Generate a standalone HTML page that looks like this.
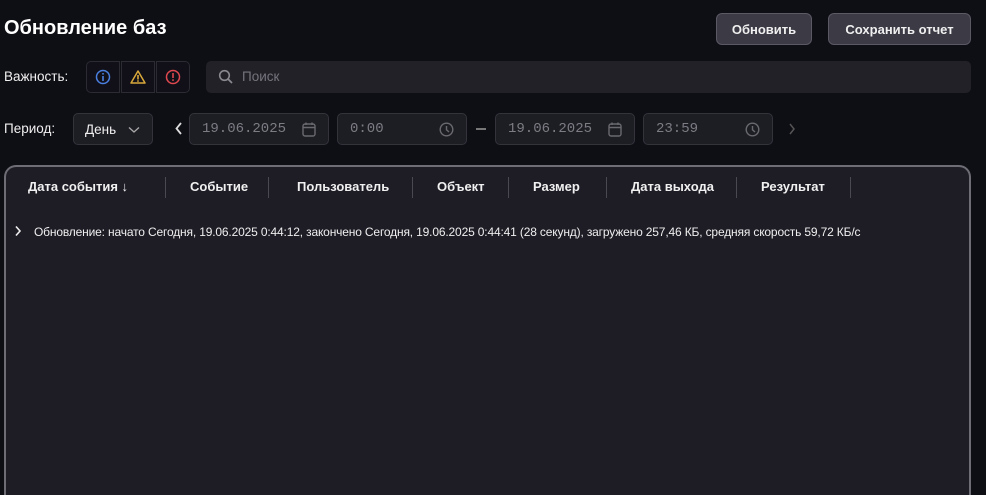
<!DOCTYPE html>
<html><head><meta charset="utf-8"><style>
*{box-sizing:border-box;margin:0;padding:0}
html{width:986px;height:495px;overflow:hidden;background:#0e0e15}
body{width:986px;height:495px;background:#0e0e15;font-family:"Liberation Sans",sans-serif;color:#fff;position:relative;overflow:hidden}
.a{position:absolute}
.btn{position:absolute;top:13px;height:32px;background:#3b3a45;border:1px solid #5a5964;border-radius:6px;font-weight:bold;font-size:13px;display:flex;align-items:center;justify-content:center;color:#f0f0f0}
.lbl{font-size:13.5px;color:#f0f0f0}
.ib{position:absolute;top:61px;width:34px;height:32px;border:1px solid #2c2b33;background:#111018;display:flex;align-items:center;justify-content:center}
.inp{position:absolute;top:113px;height:32px;background:#1d1d24;border:1px solid #34333c;border-radius:5px;font-family:"Liberation Mono",monospace;font-size:14px;color:#7d7c84;padding-left:12px;display:flex;align-items:center}
.inp svg{position:absolute;right:12px;top:8px}
.th{position:absolute;top:179px;font-weight:bold;font-size:13px;color:#f0f0f0}
.sep{position:absolute;top:177px;width:1px;height:21px;background:#4a4952}
</style></head><body>
<div class="a" style="left:4px;top:17px;font-size:20px;font-weight:bold">Обновление баз</div>
<div class="btn" style="left:716px;width:96px">Обновить</div>
<div class="btn" style="left:828px;width:143px">Сохранить отчет</div>
<div class="a lbl" style="left:4px;top:69px">Важность:</div>
<div class="ib" style="left:86px;border-radius:5px 0 0 5px"><svg width="16" height="16"><circle cx="8" cy="8" r="6.5" fill="none" stroke="#4a7fe0" stroke-width="1.5"/><rect x="7.2" y="7" width="1.6" height="5" fill="#4a7fe0"/><rect x="7.2" y="4" width="1.6" height="1.6" fill="#4a7fe0"/></svg></div>
<div class="ib" style="left:121px"><svg width="16" height="16"><path d="M8 2L15 14H1Z" fill="none" stroke="#d9a83a" stroke-width="1.5" stroke-linejoin="round"/><rect x="7.2" y="6" width="1.6" height="4.5" fill="#d9a83a"/><rect x="7.2" y="11.3" width="1.6" height="1.5" fill="#d9a83a"/></svg></div>
<div class="ib" style="left:156px;border-radius:0 5px 5px 0"><svg width="16" height="16"><circle cx="8" cy="8" r="6.5" fill="none" stroke="#e0484f" stroke-width="1.5"/><rect x="7.2" y="4" width="1.6" height="5" fill="#e0484f"/><rect x="7.2" y="10.3" width="1.6" height="1.6" fill="#e0484f"/></svg></div>
<div class="a" style="left:206px;top:61px;width:765px;height:32px;background:#222128;border-radius:5px"></div>
<svg class="a" style="left:218px;top:69px" width="16" height="16"><circle cx="6.5" cy="6.5" r="4.8" fill="none" stroke="#8a8990" stroke-width="1.6"/><path d="M10 10L14 14" stroke="#8a8990" stroke-width="1.8"/></svg>
<div class="a" style="left:242px;top:69px;font-size:13.5px;color:#75747c">Поиск</div>
<div class="a lbl" style="left:4px;top:121px">Период:</div>
<div class="a" style="left:73px;top:113px;width:80px;height:32px;background:#1d1d24;border:1px solid #34333c;border-radius:5px;font-size:13.5px;padding:8px 0 0 11px;color:#f0f0f0">День <svg style="position:absolute;left:54px;top:12px" width="12" height="8"><path d="M1 1.5L6 6L11 1.5" fill="none" stroke="#aaa" stroke-width="1.3"/></svg></div>
<svg class="a" style="left:175px;top:122px" width="8" height="13"><path d="M6 1L1.5 6.5L6 12" fill="none" stroke="#ddd" stroke-width="1.8"/></svg>
<div class="inp" style="left:189px;width:140px">19.06.2025<svg width="14" height="15"><rect x="1" y="2" width="12" height="12" rx="2" fill="none" stroke="#6a6970" stroke-width="1.4"/><path d="M1 5.5H13M4 0.5V3M10 0.5V3" stroke="#6a6970" stroke-width="1.4"/></svg></div>
<div class="inp" style="left:337px;width:130px">0:00<svg width="15" height="15"><circle cx="7.5" cy="7.5" r="6.3" fill="none" stroke="#6a6970" stroke-width="1.4"/><path d="M7.5 4V7.8L10 10" fill="none" stroke="#6a6970" stroke-width="1.4"/></svg></div>
<div class="a" style="left:476px;top:128px;width:10px;height:1.5px;background:#777"></div>
<div class="inp" style="left:495px;width:140px">19.06.2025<svg width="14" height="15"><rect x="1" y="2" width="12" height="12" rx="2" fill="none" stroke="#6a6970" stroke-width="1.4"/><path d="M1 5.5H13M4 0.5V3M10 0.5V3" stroke="#6a6970" stroke-width="1.4"/></svg></div>
<div class="inp" style="left:643px;width:130px">23:59<svg width="15" height="15"><circle cx="7.5" cy="7.5" r="6.3" fill="none" stroke="#6a6970" stroke-width="1.4"/><path d="M7.5 4V7.8L10 10" fill="none" stroke="#6a6970" stroke-width="1.4"/></svg></div>
<svg class="a" style="left:788px;top:123px" width="8" height="12"><path d="M2 1L6 6L2 11" fill="none" stroke="#555" stroke-width="1.5"/></svg>
<div class="a" style="left:4px;top:165px;width:967px;height:330px;background:#1e1d26;border:2px solid #6e6d75;border-bottom:none;border-radius:12px 12px 0 0"></div>
<div class="th" style="left:28px">Дата события ↓</div>
<div class="sep" style="left:165px"></div>
<div class="th" style="left:190px">Событие</div>
<div class="sep" style="left:268px"></div>
<div class="th" style="left:297px">Пользователь</div>
<div class="sep" style="left:412px"></div>
<div class="th" style="left:437px">Объект</div>
<div class="sep" style="left:508px"></div>
<div class="th" style="left:533px">Размер</div>
<div class="sep" style="left:606px"></div>
<div class="th" style="left:631px">Дата выхода</div>
<div class="sep" style="left:736px"></div>
<div class="th" style="left:761px">Результат</div>
<div class="sep" style="left:850px"></div>
<svg class="a" style="left:14px;top:225px" width="8" height="12"><path d="M2 1.5L6 6L2 10.5" fill="none" stroke="#eee" stroke-width="1.6"/></svg>
<div class="a" style="left:34px;top:225px;font-size:12px;color:#eee;white-space:nowrap;letter-spacing:-0.16px">Обновление: начато Сегодня, 19.06.2025 0:44:12, закончено Сегодня, 19.06.2025 0:44:41 (28 секунд), загружено 257,46 КБ, средняя скорость 59,72 КБ/с</div>
</body></html>
